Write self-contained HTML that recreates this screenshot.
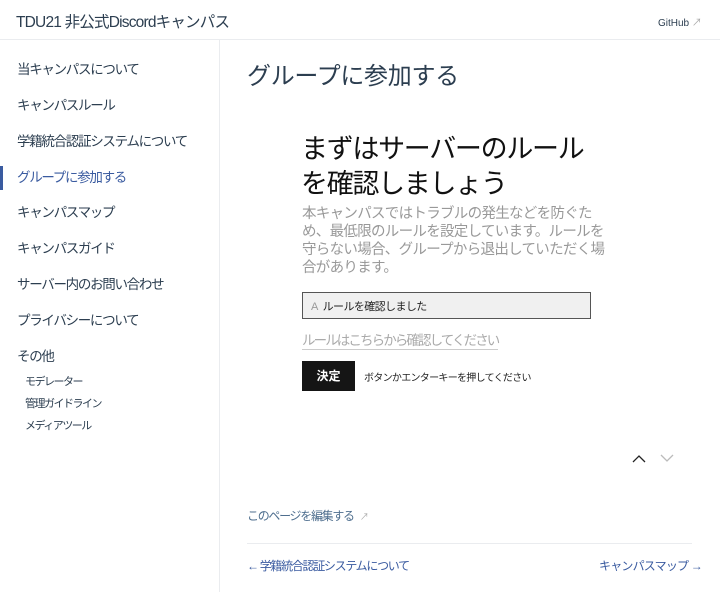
<!DOCTYPE html>
<html><head><meta charset="utf-8"><style>
*{margin:0;padding:0;box-sizing:border-box}
body{width:720px;height:592px;overflow:hidden;background:#fff;font-family:"Liberation Sans","Noto Sans CJK JP",sans-serif;color:#2c3e50;position:relative}
.a{position:absolute;white-space:nowrap}
.hdr{position:absolute;left:0;top:0;width:720px;height:40px;border-bottom:1px solid #eaecef}
.side{position:absolute;left:0;top:40px;width:220px;height:552px;border-right:1px solid #eaecef}
.si{position:absolute;left:17px;font-size:13.5px;color:#2c3e50;line-height:18px;letter-spacing:-1.3px}
.ss{position:absolute;left:25px;font-size:11px;color:#2c3e50;line-height:14px;letter-spacing:-1.5px}
</style></head><body>
<div class="hdr"></div>
<div class="a" style="left:16px;top:10px;font-size:15.5px;color:#2c3e50;letter-spacing:-0.8px">TDU21 非公式Discordキャンパス</div>
<div class="a" style="left:658px;top:14px;font-size:10px;color:#2c3e50">GitHub <span style="color:#aaa">&#x2197;</span></div>
<div class="side"></div>
<div class="si" style="top:61px">当キャンパスについて</div>
<div class="si" style="top:97px">キャンパスルール</div>
<div class="si" style="top:133px">学籍統合認証システムについて</div>
<div style="position:absolute;left:0;top:166px;width:3px;height:24px;background:#3a5ba0"></div>
<div class="si" style="top:169px;color:#3a5ba0">グループに参加する</div>
<div class="si" style="top:204px">キャンパスマップ</div>
<div class="si" style="top:240px">キャンパスガイド</div>
<div class="si" style="top:276px">サーバー内のお問い合わせ</div>
<div class="si" style="top:312px">プライバシーについて</div>
<div class="si" style="top:348px">その他</div>
<div class="ss" style="top:375px">モデレーター</div>
<div class="ss" style="top:397px">管理ガイドライン</div>
<div class="ss" style="top:419px">メディアツール</div>
<div class="a" style="left:247px;top:56px;font-size:24px;color:#2c3e50;letter-spacing:-0.3px">グループに参加する</div>
<div class="a" style="left:301px;top:132px;font-size:27px;line-height:35px;color:#111;letter-spacing:-1.3px">まずはサーバーのルール<br>を確認しましょう</div>
<div class="a" style="left:302px;top:205px;font-size:14.5px;line-height:18px;color:#999;letter-spacing:-0.7px">本キャンパスではトラブルの発生などを防ぐた<br>め、最低限のルールを設定しています。ルールを<br>守らない場合、グループから退出していただく場<br>合があります。</div>
<div style="position:absolute;left:302px;top:292px;width:289px;height:27px;border:1px solid #555;background:#f0f0f0"></div>
<div class="a" style="left:311px;top:298px;font-size:11px;color:#222;letter-spacing:-0.6px"><span style="color:#999">A</span>&nbsp; ルールを確認しました</div>
<div class="a" style="left:302px;top:332px;font-size:13.5px;color:#aaa;border-bottom:1px solid #ccc;line-height:17px;letter-spacing:-1.9px">ルールはこちらから確認してください</div>
<div style="position:absolute;left:302px;top:361px;width:53px;height:30px;background:#151515;color:#fff;font-size:12px;font-weight:bold;text-align:center;line-height:30px">決定</div>
<div class="a" style="left:364px;top:369px;font-size:10px;color:#222;letter-spacing:-0.7px">ボタンかエンターキーを押してください</div>
<svg class="a" style="left:630px;top:450px" width="46" height="16"><path d="M3 12 L9 6 L15 12" fill="none" stroke="#222" stroke-width="1.3"/><path d="M31 5 L37 11 L43 5" fill="none" stroke="#bbb" stroke-width="1.3"/></svg>
<div class="a" style="left:247px;top:507px;font-size:12px;color:#4e6e8e;letter-spacing:-1.3px">このページを編集する&nbsp;&nbsp; <span style="color:#aaa;font-size:9px;letter-spacing:0">&#x2197;</span></div>
<div style="position:absolute;left:247px;top:543px;width:445px;height:1px;background:#eaecef"></div>
<div class="a" style="left:247px;top:557px;font-size:12px;color:#3a5ba0;letter-spacing:-1.3px">← 学籍統合認証システムについて</div>
<div class="a" style="left:599px;top:557px;font-size:12px;color:#3a5ba0;letter-spacing:-0.8px">キャンパスマップ →</div>
</body></html>
